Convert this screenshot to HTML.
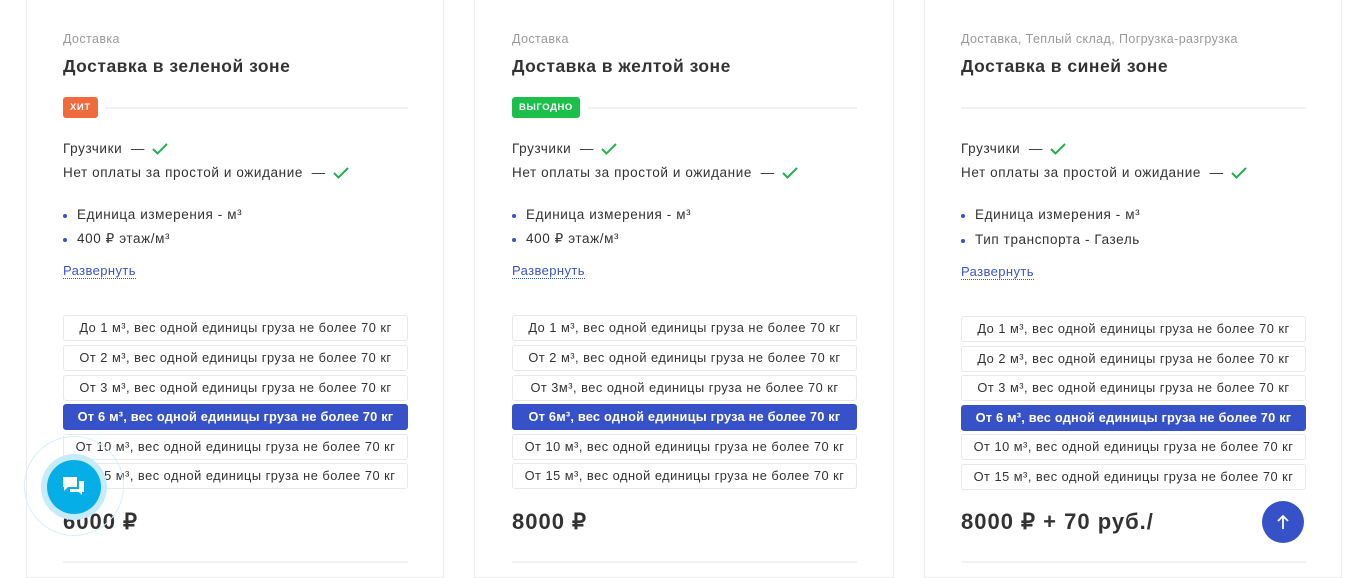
<!DOCTYPE html>
<html><head><meta charset="utf-8"><style>
*{margin:0;padding:0;box-sizing:border-box}
body{width:1347px;height:563px;overflow:hidden;background:#fff;font-family:"Liberation Sans",sans-serif;color:#333;position:relative}
.card{position:absolute;top:-2px;height:580px;border:1px solid #ececec;background:#fff}
.c{position:absolute;left:37px;width:345px}
.cat{position:absolute;top:32px;font-size:12.5px;color:#999;letter-spacing:0.4px}
.title{position:absolute;top:56px;font-size:17.5px;font-weight:bold;color:#333;letter-spacing:0.5px}
.badge{position:absolute;top:97px;height:21px;line-height:21px;padding:0 7px;border-radius:3px;color:#fff;font-size:9.5px;font-weight:bold;letter-spacing:0.6px}
.hr{position:absolute;top:107px;height:2px;background:#f2f2f2;right:0}
.chk{position:absolute;font-size:13.5px;color:#333;letter-spacing:0.6px}
.chk svg{vertical-align:-2px;margin-left:3px}
.bl{position:absolute;font-size:13.5px;color:#333;padding-left:14px;letter-spacing:0.6px}
.bl:before{content:"";position:absolute;left:0;top:7px;width:4px;height:4px;border-radius:50%;background:#3752c8}
.lnk{position:absolute;font-size:13px;color:#3a55c9;border-bottom:1px dotted #3a55c9;line-height:15px;letter-spacing:0.4px}
.opt{position:absolute;left:0;width:345px;height:26px;border:1px solid #e8e8e8;border-radius:3px;text-align:center;line-height:24px;font-size:12.8px;color:#333;white-space:nowrap;letter-spacing:0.5px}
.opt.on{background:#3752c8;border-color:#3752c8;color:#fff;font-weight:bold;letter-spacing:0.2px}
.price{position:absolute;top:509px;font-size:22px;font-weight:bold;color:#333;letter-spacing:1px}
.bot{position:absolute;top:561px;height:2px;background:#f2f2f2;width:345px}
</style></head><body>

<div class="card" style="left:26px;width:418px"></div>
<div class="card" style="left:474px;width:420px"></div>
<div class="card" style="left:924px;width:418px"></div>

<!-- card1 -->
<div class="c" style="left:63px;top:0;height:563px">
<div class="cat">Доставка</div>
<div class="title">Доставка в зеленой зоне</div>
<div class="badge" style="background:#ef6a3c">ХИТ</div>
<div class="hr" style="left:42px"></div>
<div class="chk" style="top:141px">Грузчики &nbsp;— <svg width="16" height="12" viewBox="0 0 16 12"><path d="M1 6l4.5 4.5L15 1" fill="none" stroke="#22b14c" stroke-width="2"/></svg></div>
<div class="chk" style="top:165px">Нет оплаты за простой и ожидание &nbsp;— <svg width="16" height="12" viewBox="0 0 16 12"><path d="M1 6l4.5 4.5L15 1" fill="none" stroke="#22b14c" stroke-width="2"/></svg></div>
<div class="bl" style="top:207px">Единица измерения - м³</div>
<div class="bl" style="top:231px">400 ₽ этаж/м³</div>
<div class="lnk" style="top:263px">Развернуть</div>
<div class="opt" style="top:315px">До 1 м³, вес одной единицы груза не более 70 кг</div>
<div class="opt" style="top:345px">От 2 м³, вес одной единицы груза не более 70 кг</div>
<div class="opt" style="top:375px">От 3 м³, вес одной единицы груза не более 70 кг</div>
<div class="opt on" style="top:404px">От 6 м³, вес одной единицы груза не более 70 кг</div>
<div class="opt" style="top:434px">От 10 м³, вес одной единицы груза не более 70 кг</div>
<div class="opt" style="top:463px">От 15 м³, вес одной единицы груза не более 70 кг</div>
<div class="price">6000 ₽</div>
<div class="bot"></div>
</div>

<!-- card2 -->
<div class="c" style="left:512px;top:0;height:563px">
<div class="cat">Доставка</div>
<div class="title">Доставка в желтой зоне</div>
<div class="badge" style="background:#1bbf4a">ВЫГОДНО</div>
<div class="hr" style="left:76px"></div>
<div class="chk" style="top:141px">Грузчики &nbsp;— <svg width="16" height="12" viewBox="0 0 16 12"><path d="M1 6l4.5 4.5L15 1" fill="none" stroke="#22b14c" stroke-width="2"/></svg></div>
<div class="chk" style="top:165px">Нет оплаты за простой и ожидание &nbsp;— <svg width="16" height="12" viewBox="0 0 16 12"><path d="M1 6l4.5 4.5L15 1" fill="none" stroke="#22b14c" stroke-width="2"/></svg></div>
<div class="bl" style="top:207px">Единица измерения - м³</div>
<div class="bl" style="top:231px">400 ₽ этаж/м³</div>
<div class="lnk" style="top:263px">Развернуть</div>
<div class="opt" style="top:315px">До 1 м³, вес одной единицы груза не более 70 кг</div>
<div class="opt" style="top:345px">От 2 м³, вес одной единицы груза не более 70 кг</div>
<div class="opt" style="top:375px">От 3м³, вес одной единицы груза не более 70 кг</div>
<div class="opt on" style="top:404px">От 6м³, вес одной единицы груза не более 70 кг</div>
<div class="opt" style="top:434px">От 10 м³, вес одной единицы груза не более 70 кг</div>
<div class="opt" style="top:463px">От 15 м³, вес одной единицы груза не более 70 кг</div>
<div class="price">8000 ₽</div>
<div class="bot"></div>
</div>

<!-- card3 -->
<div class="c" style="left:961px;top:0;height:563px">
<div class="cat">Доставка, Теплый склад, Погрузка-разгрузка</div>
<div class="title">Доставка в синей зоне</div>
<div class="hr" style="left:0"></div>
<div class="chk" style="top:141px">Грузчики &nbsp;— <svg width="16" height="12" viewBox="0 0 16 12"><path d="M1 6l4.5 4.5L15 1" fill="none" stroke="#22b14c" stroke-width="2"/></svg></div>
<div class="chk" style="top:165px">Нет оплаты за простой и ожидание &nbsp;— <svg width="16" height="12" viewBox="0 0 16 12"><path d="M1 6l4.5 4.5L15 1" fill="none" stroke="#22b14c" stroke-width="2"/></svg></div>
<div class="bl" style="top:207px">Единица измерения - м³</div>
<div class="bl" style="top:232px">Тип транспорта - Газель</div>
<div class="lnk" style="top:264px">Развернуть</div>
<div class="opt" style="top:316px">До 1 м³, вес одной единицы груза не более 70 кг</div>
<div class="opt" style="top:346px">До 2 м³, вес одной единицы груза не более 70 кг</div>
<div class="opt" style="top:375px">От 3 м³, вес одной единицы груза не более 70 кг</div>
<div class="opt on" style="top:405px">От 6 м³, вес одной единицы груза не более 70 кг</div>
<div class="opt" style="top:434px">От 10 м³, вес одной единицы груза не более 70 кг</div>
<div class="opt" style="top:464px">От 15 м³, вес одной единицы груза не более 70 кг</div>
<div class="price">8000 ₽ + 70 руб./</div>
<div class="bot"></div>
</div>

<!-- chat button -->
<div style="position:absolute;left:24px;top:436px;width:100px;height:100px;border-radius:50%;border:1px solid #d8f0fa"></div>
<div style="position:absolute;left:41px;top:454px;width:66px;height:66px;border-radius:50%;background:#c6ebfa"></div>
<div style="position:absolute;left:47px;top:460px;width:54px;height:54px;border-radius:50%;background:#06aee8"></div>
<svg style="position:absolute;left:61px;top:475px" width="26" height="24" viewBox="0 0 26 24"><path d="M2 2h14v10H7l-4 4v-4H2z" fill="#fff"/><path d="M18 6h5v11h-2v3l-3-3H9v-3h9z" fill="#fff"/></svg>

<!-- up button -->
<div style="position:absolute;left:1262px;top:501px;width:42px;height:42px;border-radius:50%;background:#3752c8"></div>
<svg style="position:absolute;left:1274px;top:513px" width="18" height="18" viewBox="0 0 18 18"><path d="M9 16V3M4 8l5-5 5 5" fill="none" stroke="#fff" stroke-width="1.8"/></svg>
</body></html>
